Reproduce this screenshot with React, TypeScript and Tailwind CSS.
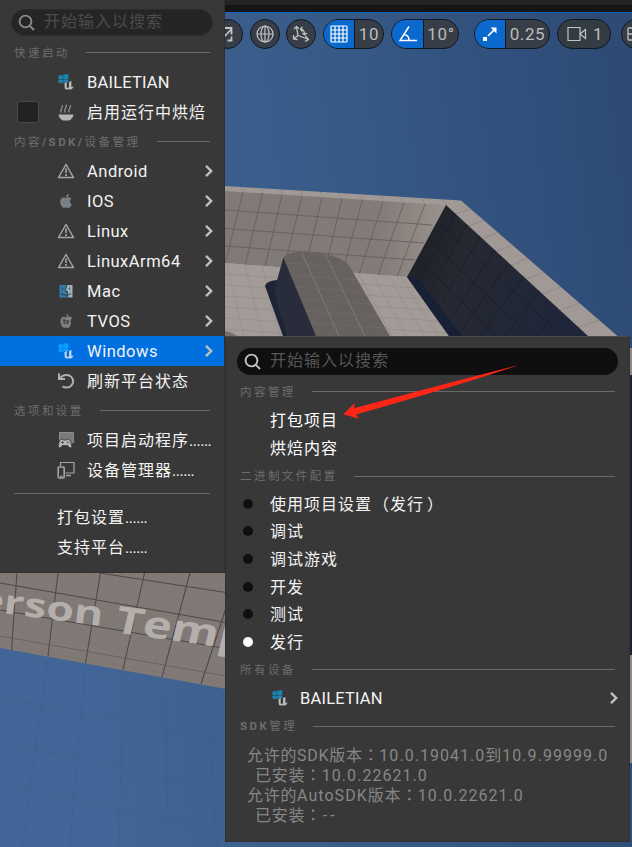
import type { ReactNode } from "react";
import { FaApple } from "react-icons/fa";

const SANS = "font-['Roboto','Noto_Sans_CJK_SC',sans-serif]";

/* ---------- 3D viewport ---------- */

const wallColumns = [
  [243, 192, 225, 264], [262.5, 193, 245, 266], [282, 195, 265, 267], [302, 197, 284, 268],
  [322, 198, 305, 268], [342, 199, 325, 270], [362.5, 200, 342, 273], [383, 202, 359, 274],
  [404, 203, 378, 275], [425, 204, 397, 277],
];
const floorColumns = [
  [227, 264, 244, 336], [245, 265, 263, 336], [262, 266, 281, 336], [358, 273, 392, 336],
  [372, 274, 407, 336], [387, 275, 425, 336], [401, 277, 438, 336],
];

function Scene() {
  return (
    <svg className="absolute inset-0" width="632" height="847" viewBox="0 0 632 847">
      <defs>
        <linearGradient id="sky" x1="0" y1="0.5" x2="1" y2="0.35">
          <stop offset="0.1" stopColor="#416596" />
          <stop offset="0.6" stopColor="#375986" />
          <stop offset="1" stopColor="#2d4b75" />
        </linearGradient>
        <linearGradient id="wall" x1="0" y1="0" x2="1" y2="0">
          <stop offset="0" stopColor="#807977" />
          <stop offset="0.7" stopColor="#827b78" />
          <stop offset="1" stopColor="#9a928c" />
        </linearGradient>
        <linearGradient id="shade" x1="0" y1="0" x2="1" y2="0.3">
          <stop offset="0" stopColor="#1b1d23" />
          <stop offset="0.4" stopColor="#262932" />
          <stop offset="1" stopColor="#20263a" />
        </linearGradient>
        <clipPath id="darkClip"><path d="M446 205L588 336H449L407 277Z" /></clipPath>
        <clipPath id="blockClip"><path d="M283.500 258Q285 252 300 252Q340 252 350 267L390 336H316Z" /></clipPath>
        <clipPath id="groundClip"><path d="M0 572H226V689L0 648Z" /></clipPath>
      </defs>
      <rect width="632" height="847" fill="url(#sky)" />
      <path d="M225 186L461 200.500L617.500 336H225Z" fill="#a09996" />
      <g stroke="#857f7c" strokeWidth="0.6">
        <path d="M241 187l3 5M261 188l2 5M280 189l3 6M300 190.500l3 6M320 191.500l3 6M339 193l3 6M359 194l4 6M380 195l4 7M400 197l4 6M421 198l4 6M442 199l5 6M471 209l-15 5M484 220l-15 6M498 232l-16 7M513 245l-18 7M528 258l-18 8M544 272l-20 8M561 287l-21 8M580 303l-22 8M600 320l-24 8" />
      </g>
      <path d="M225 191L446 205L407 277L225 263Z" fill="url(#wall)" />
      <g stroke="#625d5b" strokeWidth="0.8">
        {wallColumns.map(([x1, y1, x2, y2]) => <line key={x1} x1={x1} y1={y1} x2={x2} y2={y2} />)}
        <path d="M225 210L432 225M225 228.500L424 243M225 246L415 260" />
      </g>
      <path d="M225 263L407 277L449 336H225Z" fill="#a39b98" />
      <g stroke="#918a87" strokeWidth="0.6">
        {floorColumns.map(([x1, y1, x2, y2]) => <line key={x1} x1={x1} y1={y1} x2={x2} y2={y2} />)}
        <path d="M225 274L415 288M225 285L422 299M225 296L430 310M225 307L438 321M225 318L446 333M225 329L320 336" />
      </g>
      <path d="M225 331Q232 332 237 336H225Z" fill="#77716e" />
      <path d="M446 205L588 336H449L407 277Z" fill="url(#shade)" />
      <g clipPath="url(#darkClip)" stroke="#1b1e27" strokeWidth="0.8">
        <path d="M438 222L562 336M429 240L530 336M418 259L497 336M455 213L420 280M467 224L430 292M480 236L440 306M494 250L451 320M508 263L462 330M524 276L480 336M540 291L505 336M557 307L538 336" />
      </g>
      <path d="M407 277L418 278L462 336H449Z" fill="#172035" />
      <path d="M265 286Q266 281 277 280L290 336H283Z" fill="#1d2436" />
      <path d="M283.500 257L274 291L287 336H317Z" fill="#292d3b" />
      <path d="M283.500 258Q285 252 300 252Q340 252 350 267L390 336H316Z" fill="#67625e" />
      <g clipPath="url(#blockClip)" stroke="#736e6a" strokeWidth="0.6">
        <path d="M285 263L352 268M289 275L358 280M294 287L365 292M299 299L372 304M305 311L379 316M311 323L386 328" />
        <path d="M301 251L339 336M324 252L365 336" stroke="#827d79" strokeWidth="0.9" />
      </g>

      <path d="M0 572H226V689L0 648Z" fill="#817976" />
      <g clipPath="url(#groundClip)">
        <g stroke="#7a7370" strokeWidth="0.4">
          <path d="M7 573L1 648M27 573L20 652M38 573L30 653M48 573L39 655M69 573L58 658M79 573L67 660M90 573L76 661M112 573L95 665M122 573L104 666M133 573L113 668M156 573L132 672M167 573L142 674M178 573L152 676M202 573L172 679M213 573L182 681M225 573L191 683M0 592L226 630M0 601L226 639M0 619L226 657M0 628L226 666M0 645L226 684M0 574L226 612M50 573L226 601" />
        </g>
        <g stroke="#4e4947" strokeWidth="1.1">
          <path d="M17 573L11.500 650M58 573L48 656M100.500 573L85.500 663M144.500 573L123 670M190 573L162 677M226 608L201 684M100 573L226 592.500M0 583L226 622.500M0 610L226 648.500" />
        </g>
        <path d="M0 636L226 676" stroke="#655e5c" strokeWidth="0.8" />
        <text
          transform="matrix(1.31 0.175 -0.12 0.98 -23.5 609.5)"
          className="font-['Open_Sans',sans-serif] font-bold"
          fontSize="34"
          fill="#b5afac"
        >erson</text>
        <text
          transform="matrix(1.33 0.19 -0.24 1.02 113 632)"
          className="font-['Open_Sans',sans-serif] font-bold"
          fontSize="36"
          fill="#b5afac"
        >Temp</text>
      </g>
      <g stroke="#38587f" strokeOpacity="0.25" strokeWidth="1">
        <path d="M48 660L22 847M85 668L70 847M123 675L119 847M166 690L168 847M207 690L217 847M0 698L226 740M0 742L226 790M0 783L226 832" />
      </g>
      <path d="M628 348h4v27h-4zM628 655h4v108h-4z" fill="#918986" />
      <rect x="628" y="375" width="4" height="280" fill="#1d2232" />
    </svg>
  );
}

/* ---------- viewport toolbar ---------- */

function Pill({ icon, label, className, iconClass }: { icon: ReactNode; label: string; className: string; iconClass: string }) {
  return (
    <div className={`flex h-[30px] shrink-0 overflow-hidden rounded-full border border-[#101824] bg-[#373e47] ${className}`}>
      <div className={`flex h-full shrink-0 items-center justify-center border-r border-[#101824] bg-[#0b68cc] ${iconClass}`}>{icon}</div>
      <div className="flex flex-1 items-center justify-center pt-px text-[17px] tracking-[0.600px] text-[#bcbcbc]">{label}</div>
    </div>
  );
}

const round = "flex size-[30px] shrink-0 items-center justify-center rounded-full border border-[#101824] bg-[#373e47]";

function Toolbar() {
  return (
    <div className="relative">
      <div className="h-[5px] bg-[#242424]" />
      <div className="h-[7px] bg-[#151515]" />
      <div className="h-px bg-[#1164be]" />
      <div className="flex overflow-hidden pt-[6px] pl-[213px]">
        <div className={round}>
          <svg width="18" height="18" viewBox="0 0 18 18" fill="none" stroke="#c4c4c4" strokeWidth="1.800">
            <path d="M5 12L12 4.500M6 3h6.500v6.500M12.500 11.500v4h-4" />
          </svg>
        </div>
        <div className={`${round} ml-[7px]`}>
          <svg width="18" height="18" viewBox="0 0 18 18" fill="none" stroke="#c4c4c4" strokeWidth="1.200">
            <circle cx="9" cy="9" r="8" /><ellipse cx="9" cy="9" rx="4" ry="8" /><path d="M9 1v16M1 9h16" />
          </svg>
        </div>
        <div className={`${round} ml-[6px]`}>
          <svg width="20" height="20" viewBox="0 0 20 20" fill="none" stroke="#c4c4c4" strokeWidth="1.300">
            <path d="M7 11.500L5.500 3M3 5L5.500 2.500L8 4.500M7 11.500L16.500 15M14.500 12L17.500 15.500L14 17.500M7 11.500L3 14.500M2.500 11L2.500 15L6.500 15.500M10 5Q13.500 6 13.500 10M11.500 3L9.500 5L11.500 7.500M11.500 9L13.500 11L16 9" />
          </svg>
        </div>
        <Pill className="ml-[7px] w-[61px]" iconClass="w-[31px]" label="10" icon={
          <svg width="18" height="18" viewBox="0 0 18 18" fill="none" stroke="#fff" strokeWidth="1.200">
            <rect x="1" y="1" width="16" height="16" rx="1" /><path d="M5 1v16M9 1v16M13 1v16M1 5h16M1 9h16M1 13h16" />
          </svg>
        } />
        <Pill className="ml-[7px] w-[68px]" iconClass="w-[32px]" label="10°" icon={
          <svg width="20" height="18" viewBox="0 0 20 18" fill="none" stroke="#fff" strokeWidth="1.500">
            <path d="M11 1.500L2 15.500H19M6 9.500Q11 10 11 15.500" />
          </svg>
        } />
        <Pill className="ml-[15px] w-[76px]" iconClass="w-[31px]" label="0.25" icon={
          <svg width="16" height="16" viewBox="0 0 16 16" fill="none" stroke="#fff" strokeWidth="1.700">
            <path d="M6 10L13 3" /><path d="M8.500 1.500H14.500V7.500Z" fill="#fff" stroke="none" /><path d="M1 11h4v4H1z" fill="#fff" stroke="none" />
          </svg>
        } />
        <div className="ml-[7px] flex h-[30px] w-[54px] shrink-0 items-center gap-[6px] rounded-full border border-[#101824] bg-[#343c43] pl-[9px] text-[17px] text-[#bcbcbc]">
          <svg width="20" height="16" viewBox="0 0 20 16" fill="none" stroke="#c4c4c4" strokeWidth="1.200">
            <path d="M1 1.500h12v13H1zM13 8L18.500 3.500V12.500Z" />
          </svg>
          <span className="pt-px">1</span>
        </div>
        <div className={`${round} ml-[10px] justify-start pl-[5px]`}>
          <svg width="18" height="14" viewBox="0 0 18 14" fill="none" stroke="#c4c4c4" strokeWidth="1.300" className="shrink-0">
            <rect x="1" y="1" width="16" height="12" rx="1" /><path d="M1 7h16M9 1v12" />
          </svg>
        </div>
      </div>
    </div>
  );
}

/* ---------- menu icons ---------- */

function WindowsUnreal({ active = false }: { active?: boolean }) {
  return (
    <svg width="18" height="18" viewBox="0 0 18 18">
      <path d="M1.500 2.500L5.700 1.900V5.900H1.500zM6.200 1.800L11.300 1V5.900H6.200zM1.500 6.400H5.700V10.300L1.500 9.700zM6.200 6.400H11.300V9H7.500L6.200 10z" fill={active ? "#0aa0ff" : "#1a85b4"} />
      <path d="M6.500 11.200Q8.300 8.800 10.300 8.400L9.700 9.500V14.500Q10.700 15.300 12 14.300V9.500L11.600 8.900L14.800 8.100L14.400 9V14L16.800 13.500Q15.500 16.500 12.800 16.800L11.900 15.900Q10.800 16.900 9 16.500Q7.600 16 7.600 14V10.800Z" fill={active ? "#b9d2ef" : "#bababa"} />
    </svg>
  );
}

const Warning = () => (
  <svg width="18" height="18" viewBox="0 0 18 18" fill="none" stroke="#a5a5a5">
    <path d="M9 2.500L16.500 15.500H1.500Z" strokeWidth="1.500" strokeLinejoin="round" />
    <path d="M9 6.500V11M9 12V14" strokeWidth="1.600" />
  </svg>
);

const Bowl = () => (
  <svg width="18" height="18" viewBox="0 0 18 18">
    <path d="M1.500 11.500H16.500Q16 15.500 12 17.500H6Q2 15.500 1.500 11.500Z" fill="#b5b5b5" />
    <path d="M4.500 9.500Q3 8 4.300 6T5.500 2M8.500 9.500Q7 8 8.300 5.500T9.500 1.500M12.500 9.500Q11 8 12.300 6T13.500 2" fill="none" stroke="#8d8d8d" strokeWidth="1.300" />
  </svg>
);

const Finder = () => (
  <svg width="18" height="18" viewBox="0 0 18 18">
    <path d="M2.500 3H9.500L8.500 9H10V15.500H2.500z" fill="#357ba6" />
    <path d="M9.500 3H15.500V15.500H10V9H8.500Z" fill="#9fafba" />
    <path d="M5.500 5.500V7.500M12.500 5.500V7.500M4 11.500Q9 15 14 11.500M10 3Q8.500 6 8.500 9.500H10.500V15.500" fill="none" stroke="#203543" strokeWidth="0.900" />
  </svg>
);

const AppleTv = () => (
  <svg width="18" height="18" viewBox="0 0 18 18">
    <path d="M9 5.200Q13.500 3 15 6.200Q13 8 14 11.500Q13 15.500 11 16Q9 15.200 7 16Q4.500 15 3.500 11Q3 5.500 6 4.800Q7.500 4.500 9 5.200ZM9 4.500Q9 2 11.500 1.500Q11.500 4 9 4.500Z" fill="#7c7f81" />
    <text x="9" y="12.200" textAnchor="middle" fontSize="7" fontWeight="700" fill="#303030">tv</text>
  </svg>
);

const Refresh = () => (
  <svg width="18" height="18" viewBox="0 0 18 18" fill="none" stroke="#b0b0b0" strokeWidth="2">
    <path d="M2 1.500V7H8M2.500 6.800Q5 3 9.800 3A6.300 6.300 0 0 1 9.800 15.600Q7.500 15.600 5.500 14.300" />
  </svg>
);

const Launcher = () => (
  <svg width="18" height="18" viewBox="0 0 18 18">
    <path d="M2.500 1.500H16.500V11.500H2.500z" fill="#7a7a7a" stroke="#8c8c8c" />
    <path d="M3.500 8.500Q5 7.500 6.500 9H9.500Q11 7.500 12.500 8.500Q15 12 14.800 16.500Q13 18 10.500 14.500H5.500Q3 18 1.200 16.500Q1 12 3.500 8.500Z" fill="#b7b7b7" stroke="#383838" strokeWidth="0.800" />
    <path d="M4 11.500h3M5.500 10v3M10 10.500l2 2M12 10.500l-2 2" stroke="#555" strokeWidth="0.900" />
  </svg>
);

const Devices = () => (
  <svg width="18" height="18" viewBox="0 0 18 18" fill="none" stroke="#a4a4a4" strokeWidth="1.200">
    <path d="M3.500 5V1.500H17V12H8.500" /><rect x="1.200" y="6" width="6" height="11" rx="1" strokeWidth="1.600" />
    <path d="M3 15.500h2.500M9 14.500h5" strokeWidth="1.500" />
  </svg>
);

const SearchIcon = ({ color }: { color: string }) => (
  <svg width="18" height="18" viewBox="0 0 18 18" fill="none" stroke={color} strokeWidth="1.900">
    <circle cx="7.500" cy="7.500" r="5.900" /><path d="M11.800 11.800L16 16" />
  </svg>
);

const Chevron = () => (
  <svg width="10" height="14" viewBox="0 0 10 14" fill="none" stroke="#c0c0c0" strokeWidth="2.400" className="shrink-0">
    <path d="M2 1.800L7.200 7L2 12.200" />
  </svg>
);

/* ---------- menu parts ---------- */

function Heading({ children, textClass, className = "" }: { children: ReactNode; textClass: string; className?: string }) {
  return (
    <div className={`flex items-center ${className}`}>
      <div className={`shrink-0 whitespace-nowrap text-[11.500px] leading-[14px] tracking-[2.450px] text-[#6d6d6d] ${textClass}`}>{children}</div>
      <div className="h-px flex-1 bg-[#6a6a6a]" />
    </div>
  );
}

const latin = "text-[16.500px] tracking-[0.500px]";
const caps = "text-[16.500px] tracking-[0.200px]";
const han = "text-[16px] tracking-[1px]";

const Dots = () => <span className="tracking-[-0.500px]">......</span>;
const Wide = ({ children, className = "" }: { children: ReactNode; className?: string }) => (
  <span className={`font-['Noto_Sans_CJK_TC',sans-serif] leading-none ${className}`}>{children}</span>
);
const Version = ({ children }: { children: ReactNode }) => <span className="tracking-[1.030px]">{children}</span>;

function Row({ icon, children, arrow = false, active = false, check = false, textClass = han }: {
  icon: ReactNode; children: ReactNode; arrow?: boolean; active?: boolean; check?: boolean; textClass?: string;
}) {
  return (
    <div className={`flex h-[30px] items-center pr-[10px] ${active ? "bg-[#0070e0]" : ""}`}>
      <div className="flex w-[57px] shrink-0 pl-[17px]">
        {check && <div className="size-[22px] rounded-[3px] border border-[#4b4b4b] bg-[#222]" />}
      </div>
      <div className="w-[30px] shrink-0">{icon}</div>
      <div className={`flex-1 pt-[2px] whitespace-nowrap text-[#f2f2f2] ${textClass}`}>{children}</div>
      {arrow && <Chevron />}
    </div>
  );
}

function PlatformMenu() {
  return (
    <div className="absolute top-0 left-0 flex h-[573px] w-[225px] flex-col overflow-hidden border-r border-b border-[#303030] bg-[#383838]">
      <div className="mt-[9px] ml-[11px] flex h-[27px] w-[202px] shrink-0 items-center rounded-full border border-[#2c2c2c] bg-[#252525] pl-[6px]">
        <SearchIcon color="#8a8a8a" />
        <span className={`ml-[8px] -mt-px text-[#4c4c4c] ${han}`}>开始输入以搜索</span>
      </div>
      <Heading className="h-[31px] pt-[2px] pr-[14px] pl-[14px]" textClass="w-[72px]">快速启动</Heading>
      <Row icon={<WindowsUnreal />} textClass={caps}>BAILETIAN</Row>
      <Row icon={<Bowl />} check>启用运行中烘焙</Row>
      <Heading className="h-[29px] pr-[14px] pl-[14px]" textClass="w-[143px]">内容<b>/SDK/</b>设备管理</Heading>
      <Row icon={<Warning />} arrow textClass={latin}>Android</Row>
      <Row icon={<FaApple className="ml-px size-[16px] text-[#7b8085]" />} arrow textClass={latin}>IOS</Row>
      <Row icon={<Warning />} arrow textClass={latin}>Linux</Row>
      <Row icon={<Warning />} arrow textClass={latin}>LinuxArm64</Row>
      <Row icon={<Finder />} arrow textClass={latin}>Mac</Row>
      <Row icon={<AppleTv />} arrow textClass={latin}>TVOS</Row>
      <Row icon={<WindowsUnreal active />} arrow active textClass={latin}>Windows</Row>
      <Row icon={<Refresh />}>刷新平台状态</Row>
      <Heading className="h-[29px] pr-[14px] pl-[14px]" textClass="w-[86px]">选项和设置</Heading>
      <Row icon={<Launcher />}>项目启动程序<Dots /></Row>
      <Row icon={<Devices />}>设备管理器<Dots /></Row>
      <div className="mx-[14px] my-[8px] h-px shrink-0 bg-[#6a6a6a]" />
      <div className={`flex h-[30px] items-center pt-[2px] pl-[57px] text-[#f2f2f2] ${han}`}><span>打包设置<Dots /></span></div>
      <div className={`flex h-[30px] items-center pt-[2px] pl-[57px] text-[#f2f2f2] ${han}`}><span>支持平台<Dots /></span></div>
    </div>
  );
}

function Choice({ children, selected = false }: { children: ReactNode; selected?: boolean }) {
  return (
    <div className="flex h-[27.600px] shrink-0 items-center pl-[17px]">
      <div className={`mr-[17px] size-[10px] rounded-full ${selected ? "bg-white" : "bg-[#0f0f0f]"}`} />
      <div className={`h-[24px] pt-px leading-[24px] whitespace-nowrap text-[#f2f2f2] ${han}`}>{children}</div>
    </div>
  );
}

function WindowsMenu() {
  return (
    <div className="absolute top-[336px] left-[225px] flex h-[506px] w-[405px] flex-col border border-[#303030] border-t-[#4a4a4a] bg-[#383838]">
      <div className="mt-[11px] ml-[11px] flex h-[27px] w-[381px] shrink-0 items-center rounded-full bg-[#0f0f0f] pl-[7px]">
        <SearchIcon color="#c4c4c4" />
        <span className={`ml-[8px] -mt-px text-[#575757] ${han}`}>开始输入以搜索</span>
      </div>
      <Heading className="h-[31px] pt-[2px] pr-[14px] pl-[14px]" textClass="w-[72px]">内容管理</Heading>
      <div className={`flex h-[28px] items-center pt-[2px] pl-[44px] text-white ${han}`}>打包项目</div>
      <div className={`flex h-[28px] items-center pt-[2px] pl-[44px] text-white ${han}`}>烘焙内容</div>
      <Heading className="h-[28px] pr-[14px] pl-[14px]" textClass="w-[114px]">二进制文件配置</Heading>
      <Choice>使用项目设置<Wide className="ml-px">（</Wide>发行<Wide className="ml-[3px]">）</Wide></Choice>
      <Choice>调试</Choice>
      <Choice>调试游戏</Choice>
      <Choice>开发</Choice>
      <Choice>测试</Choice>
      <Choice selected>发行</Choice>
      <Heading className="h-[27px] pt-px pr-[14px] pl-[14px]" textClass="w-[72px]">所有设备</Heading>
      <div className="flex h-[30px] items-center pt-px pr-[10px] pl-[45px]">
        <WindowsUnreal />
        <span className={`ml-[11px] flex-1 pt-[2px] text-[#f2f2f2] ${caps}`}>BAILETIAN</span>
        <Chevron />
      </div>
      <Heading className="h-[27px] pr-[14px] pl-[14px]" textClass="w-[73px]"><b>SDK</b>管理</Heading>
      <div className="mt-[6px] pl-[21px] text-[16px] leading-[20px] tracking-[0.700px] whitespace-nowrap text-[#878787]">
        <div className="h-[20px]">允许的SDK版本<Wide>：</Wide><Version>10.0.19041.0到10.9.99999.0</Version></div>
        <div className="h-[20px] pl-[8px]">已安装<Wide>：</Wide><Version>10.0.22621.0</Version></div>
        <div className="h-[20px]">允许的<Version>AutoSDK</Version>版本<Wide>：</Wide><Version>10.0.22621.0</Version></div>
        <div className="h-[20px] pl-[8px]">已安装<Wide>：</Wide><span className="ml-px tracking-[3px]">--</span></div>
      </div>
      <svg className="absolute top-[25px] left-[115px]" width="180" height="62" viewBox="341 362 180 62">
        <path d="M343.300 414.300L355 402.700L354 408.300Q440 385 517.700 365.300Q470 382 356 414.500L359 418.700Z" fill="#ff2616" />
      </svg>
    </div>
  );
}

export default function App() {
  return (
    <div className={`relative h-[847px] w-[632px] overflow-hidden ${SANS}`}>
      <Scene />
      <Toolbar />
      <PlatformMenu />
      <WindowsMenu />
    </div>
  );
}
